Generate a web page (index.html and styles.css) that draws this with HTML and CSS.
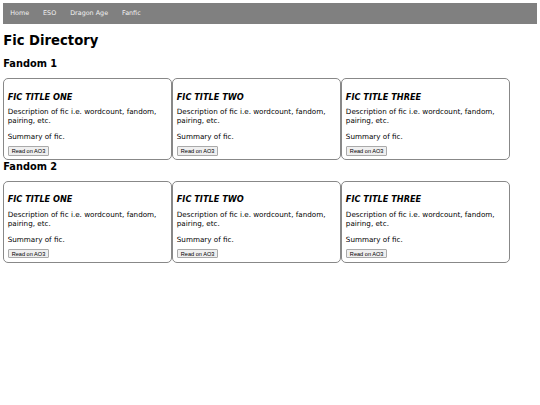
FILE: index.html
```html
<!DOCTYPE html>
<html lang="en">
<head>
    <meta charset="UTF-8">
    <meta name="viewport" content="width=device-width, initial-scale=1.0">
    <title>Fic Directory</title>
    <link rel="stylesheet" href="styles.css">
</head>
<body>
    <ul class="nav">
        <li><a href="#">Home</a></li>
        <li><a href="#">ESO</a></li>
        <li><a href="#">Dragon Age</a></li>
        <li><a href="#">Fanfic</a></li>
    </ul>

    <h1>Fic Directory</h1>

    <div class="fandom">
        <h2>Fandom 1</h2>
        <div class="cards">
            <div class="card">
                <h3>FIC TITLE ONE</h3>
                <p class="desc">Description of fic i.e. wordcount, fandom, pairing, etc.</p>
                <p class="summary">Summary of fic.</p>
                <button>Read on AO3</button>
            </div>
            <div class="card">
                <h3>FIC TITLE TWO</h3>
                <p class="desc">Description of fic i.e. wordcount, fandom, pairing, etc.</p>
                <p class="summary">Summary of fic.</p>
                <button>Read on AO3</button>
            </div>
            <div class="card">
                <h3>FIC TITLE THREE</h3>
                <p class="desc">Description of fic i.e. wordcount, fandom, pairing, etc.</p>
                <p class="summary">Summary of fic.</p>
                <button>Read on AO3</button>
            </div>
        </div>
    </div>

    <div class="fandom">
        <h2>Fandom 2</h2>
        <div class="cards">
            <div class="card">
                <h3>FIC TITLE ONE</h3>
                <p class="desc">Description of fic i.e. wordcount, fandom, pairing, etc.</p>
                <p class="summary">Summary of fic.</p>
                <button>Read on AO3</button>
            </div>
            <div class="card">
                <h3>FIC TITLE TWO</h3>
                <p class="desc">Description of fic i.e. wordcount, fandom, pairing, etc.</p>
                <p class="summary">Summary of fic.</p>
                <button>Read on AO3</button>
            </div>
            <div class="card">
                <h3>FIC TITLE THREE</h3>
                <p class="desc">Description of fic i.e. wordcount, fandom, pairing, etc.</p>
                <p class="summary">Summary of fic.</p>
                <button>Read on AO3</button>
            </div>
        </div>
    </div>
</body>
</html>
```

FILE: styles.css
```css
body {
    font-family: "DejaVu Sans", Verdana, sans-serif;
    font-size: 6.4px;
    margin: 3.2px;
    color: #000;
    background-color: #fff;
}
.nav {
    list-style: none;
    margin: 0;
    padding: 0;
    display: flex;
    background-color: #808080;
}
.nav a {
    display: block;
    color: #f2f2f2;
    text-decoration: none;
    padding: 6.3px 7px;
}
h1 {
    font-size: 13.2px;
    margin: 9.4px 0 9.4px;
}
h2 {
    font-size: 9.8px;
    margin: 0 0 9.6px;
}
.fandom + .fandom h2 {
    margin: 1px 0 8.6px;
}
.cards {
    display: flex;
}
.card {
    width: 30%;
    padding: 3.5px;
    border: 1px solid #888;
    border-radius: 5px;
}
.card h3 {
    font-size: 8.2px;
    font-style: italic;
    margin: 9px 0 5.5px;
}
.card p {
    font-size: 7.2px;
    margin: 0;
}
.card .desc {
    margin-bottom: 7.3px;
}
.card .summary {
    margin-bottom: 5px;
}
button {
    display: block;
    font-family: "Liberation Sans", Arial, sans-serif;
    font-size: 5.6px;
    padding: 0.6px 3px;
    background-color: #efefef;
    border: 1px solid #aaa;
    border-radius: 1px;
    color: #000;
}
```
